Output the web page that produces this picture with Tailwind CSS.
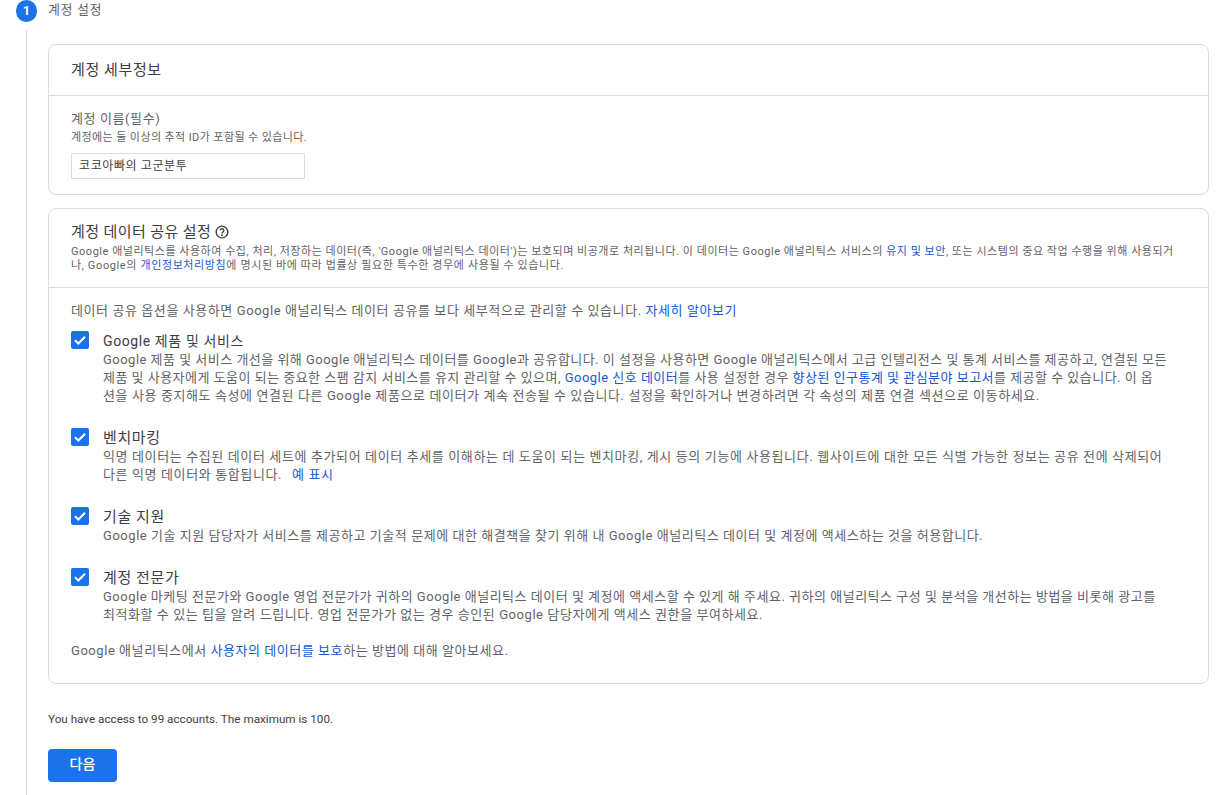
<!DOCTYPE html>
<html lang="ko">
<head>
  <meta charset="UTF-8" />
  <title>계정 설정</title>
  <script src="https://cdn.jsdelivr.net/npm/@tailwindcss/browser@4"></script>
</head>
<body class="bg-white h-[795px] overflow-hidden font-['Roboto','Noto_Sans_CJK_KR',sans-serif] text-[#5f6368]">

  <div class="flex items-center h-[22px] ml-4 gap-[11px]">
    <div class="w-[21px] h-[22px] rounded-full bg-[#1a73e8] text-white text-[13px] font-bold flex items-center justify-center">1</div>
    <div class="text-[13px] tracking-[0.6px] leading-[20px] -mt-[2px]">계정 설정</div>
  </div>

  <div class="ml-[26px] mt-[8px] border-l border-[#dadce0] h-[765px] pl-[21px] pt-[14px] w-[1183px]">

    <section class="border border-[#dadce0] rounded-lg h-[151px]">
      <div class="h-[51px] border-b border-[#dadce0] px-[22px] pt-[15px] text-[15px] tracking-[0.6px] leading-5 text-[#3c4043]">계정 세부정보</div>
      <div class="px-[22px] pt-[14px]">
        <div class="text-[13px] tracking-[0.6px] leading-[18px]">계정 이름(필수)</div>
        <div class="text-[11px] tracking-[0.4px] leading-[14px] mt-[3px]">계정에는 둘 이상의 추적 ID가 포함될 수 있습니다.</div>
        <div class="mt-[8px] w-[234px] h-[26px] border border-[#dadce0] px-[7px] text-xs tracking-[0.6px] leading-[24px] text-[#3c4043]">코코아빠의 고군분투</div>
      </div>
    </section>

    <section class="mt-[13px] border border-[#dadce0] rounded-lg h-[476px]">
      <div class="h-[79px] border-b border-[#dadce0] px-[22px] pt-[13px]">
        <div class="flex items-center gap-[4px] text-[15px] tracking-[0.4px] leading-5 text-[#3c4043]">계정 데이터 공유 설정
          <svg class="w-[14px] h-[14px]" viewBox="0 0 24 24" fill="none" stroke="#3c4043" stroke-width="2.4"><circle cx="12" cy="12" r="10"/><path d="M9 9.5a3 3 0 1 1 4.6 2.5c-1 .7-1.6 1.2-1.6 2.5"/><circle cx="12" cy="17.5" r="0.6" fill="#3c4043"/></svg>
        </div>
        <p class="text-[11px] tracking-[0.53px] leading-[14px] mt-[3px] whitespace-nowrap">Google 애널리틱스를 사용하여 수집, 처리, 저장하는 데이터(즉, 'Google 애널리틱스 데이터')는 보호되며 비공개로 처리됩니다. 이 데이터는 Google 애널리틱스 서비스의 <a class="text-[#1558d6]">유지 및 보안</a>, 또는 시스템의 중요 작업 수행을 위해 사용되거<br><span class="tracking-[0.62px]">나, Google의 <a class="text-[#1558d6]">개인정보처리방침</a>에 명시된 바에 따라 법률상 필요한 특수한 경우에 사용될 수 있습니다.</span></p>
      </div>
      <div class="px-[22px] pt-[14px]">
        <p class="text-[13px] tracking-[0.58px] leading-[18px] whitespace-nowrap">데이터 공유 옵션을 사용하면 Google 애널리틱스 데이터 공유를 보다 세부적으로 관리할 수 있습니다. <a class="text-[#1558d6]">자세히 알아보기</a></p>

        <div class="flex gap-[14px] mt-[11px]">
          <svg class="w-[18px] h-[18px] shrink-0" viewBox="0 0 18 18"><rect width="18" height="18" rx="2" fill="#1a73e8"/><path d="M4 9.2l3.4 3.3L14 5.8" fill="none" stroke="#fff" stroke-width="2"/></svg>
          <div class="flex-1">
            <div class="text-sm tracking-[0.6px] leading-[18px] mt-[1px] text-[#3c4043]">Google 제품 및 서비스</div>
            <p class="text-[13px] tracking-[0.48px] leading-[18px] mt-[1px] whitespace-nowrap">Google 제품 및 서비스 개선을 위해 Google 애널리틱스 데이터를 Google과 공유합니다. 이 설정을 사용하면 Google 애널리틱스에서 고급 인텔리전스 및 통계 서비스를 제공하고, 연결된 모든<br>제품 및 사용자에게 도움이 되는 중요한 스팸 감지 서비스를 유지 관리할 수 있으며, <a class="text-[#1558d6]">Google 신호 데이터</a>를 사용 설정한 경우 <a class="text-[#1558d6]">향상된 인구통계 및 관심분야 보고서</a>를 제공할 수 있습니다. 이 옵<br><span class="tracking-[0.6px]">션을 사용 중지해도 속성에 연결된 다른 Google 제품으로 데이터가 계속 전송될 수 있습니다. 설정을 확인하거나 변경하려면 각 속성의 제품 연결 섹션으로 이동하세요.</span></p>
          </div>
        </div>

        <div class="flex gap-[14px] mt-[23px]">
          <svg class="w-[18px] h-[18px] shrink-0" viewBox="0 0 18 18"><rect width="18" height="18" rx="2" fill="#1a73e8"/><path d="M4 9.2l3.4 3.3L14 5.8" fill="none" stroke="#fff" stroke-width="2"/></svg>
          <div class="flex-1">
            <div class="text-[15px] tracking-[0.6px] leading-[18px] mt-[1px] text-[#3c4043]">벤치마킹</div>
            <p class="text-[13px] tracking-[0.62px] leading-[18px] mt-[1px] whitespace-nowrap">익명 데이터는 수집된 데이터 세트에 추가되어 데이터 추세를 이해하는 데 도움이 되는 벤치마킹, 게시 등의 기능에 사용됩니다. 웹사이트에 대한 모든 식별 가능한 정보는 공유 전에 삭제되어<br>다른 익명 데이터와 통합됩니다. <a class="text-[#1558d6] ml-[6px]">예 표시</a></p>
          </div>
        </div>

        <div class="flex gap-[14px] mt-[23px]">
          <svg class="w-[18px] h-[18px] shrink-0" viewBox="0 0 18 18"><rect width="18" height="18" rx="2" fill="#1a73e8"/><path d="M4 9.2l3.4 3.3L14 5.8" fill="none" stroke="#fff" stroke-width="2"/></svg>
          <div class="flex-1">
            <div class="text-[15px] tracking-[0.6px] leading-[18px] mt-[1px] text-[#3c4043]">기술 지원</div>
            <p class="text-[13px] tracking-[0.54px] leading-[18px] mt-[1px] whitespace-nowrap">Google 기술 지원 담당자가 서비스를 제공하고 기술적 문제에 대한 해결책을 찾기 위해 내 Google 애널리틱스 데이터 및 계정에 액세스하는 것을 허용합니다.</p>
          </div>
        </div>

        <div class="flex gap-[14px] mt-[23px]">
          <svg class="w-[18px] h-[18px] shrink-0" viewBox="0 0 18 18"><rect width="18" height="18" rx="2" fill="#1a73e8"/><path d="M4 9.2l3.4 3.3L14 5.8" fill="none" stroke="#fff" stroke-width="2"/></svg>
          <div class="flex-1">
            <div class="text-[15px] tracking-[0.6px] leading-[18px] mt-[1px] text-[#3c4043]">계정 전문가</div>
            <p class="text-[13px] tracking-[0.51px] leading-[18px] mt-[1px] whitespace-nowrap">Google 마케팅 전문가와 Google 영업 전문가가 귀하의 Google 애널리틱스 데이터 및 계정에 액세스할 수 있게 해 주세요. 귀하의 애널리틱스 구성 및 분석을 개선하는 방법을 비롯해 광고를<br><span class="tracking-[0.56px]">최적화할 수 있는 팁을 알려 드립니다. 영업 전문가가 없는 경우 승인된 Google 담당자에게 액세스 권한을 부여하세요.</span></p>
          </div>
        </div>

        <p class="text-[13px] tracking-[0.55px] leading-[18px] mt-[18px] whitespace-nowrap">Google 애널리틱스에서 <a class="text-[#1558d6]">사용자의 데이터를 보호</a>하는 방법에 대해 알아보세요.</p>
      </div>
    </section>

    <p class="text-[11.7px] leading-4 mt-[27px] text-[#3c4043]">You have access to 99 accounts. The maximum is 100.</p>
    <button class="mt-[22px] w-[69px] h-[33px] pb-[3px] bg-[#1a73e8] rounded text-white text-sm font-medium">다음</button>
  </div>
</body>
</html>
